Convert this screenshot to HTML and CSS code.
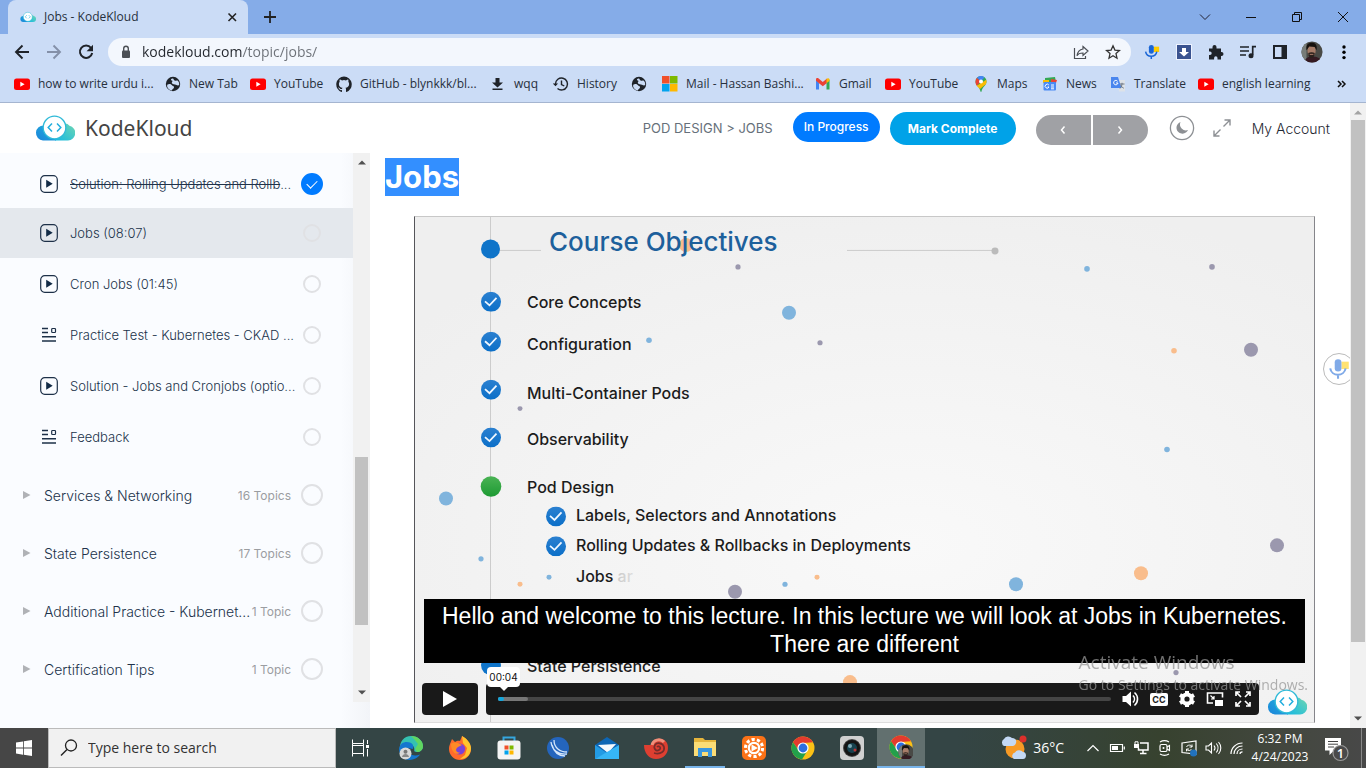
FILE: index.html
```html
<!DOCTYPE html>
<html lang="en">
<head>
<meta charset="utf-8">
<meta name="viewport" content="width=device-width, initial-scale=1">
<title>Jobs - KodeKloud</title>
<link rel="stylesheet" href="styles.css">
</head>
<body>
<svg class="defs" width="0" height="0" aria-hidden="true">
  <defs>
    <linearGradient id="gl" x1="0" y1="1" x2="1" y2="0"><stop offset="0" stop-color="#1b84da"/><stop offset="1" stop-color="#22b4dc"/></linearGradient>
    <linearGradient id="gr" x1="0" y1="1" x2="1" y2="0"><stop offset="0" stop-color="#15b9e2"/><stop offset="1" stop-color="#6fd6b2"/></linearGradient>
    <linearGradient id="blueBall" x1="0" y1="0" x2="0" y2="1"><stop offset="0" stop-color="#2b80d0"/><stop offset="1" stop-color="#0b6fc8"/></linearGradient>
    <linearGradient id="greenBall" x1="0" y1="0" x2="0" y2="1"><stop offset="0" stop-color="#4ab354"/><stop offset="1" stop-color="#1d9a33"/></linearGradient>
    <radialGradient id="paper" cx=".55" cy=".65" r=".7"><stop offset="0" stop-color="#f9f9f9"/><stop offset="1" stop-color="#efefef"/></radialGradient>
    <linearGradient id="fade" x1="0" x2="1"><stop offset="0" stop-color="#999"/><stop offset="1" stop-color="#ddd"/></linearGradient>
    <symbol id="cloud" viewBox="0 0 40 26">
      <path d="M8 25.500h13V9L9 10.500A7.500 7.500 0 0 0 8 25.500z" fill="url(#gl)"/>
      <path d="M20 25.500h13a7.500 7.500 0 0 0 1.500-14.800A6 6 0 0 0 28 9l-8 4z" fill="url(#gr)"/>
      <circle cx="19.500" cy="12.500" r="11.300" fill="#fff" stroke="#2fbad8" stroke-width="1.300"/>
      <path d="M17 8.500 13.200 12.500 17 16.500M22 8.500l3.800 4-3.800 4" fill="none" stroke="#22aede" stroke-width="1.500"/>
    </symbol>
    <symbol id="yt" viewBox="0 0 16 16"><rect y="2.500" width="16" height="11.500" rx="2.500" fill="#f00"/><path d="M6.300 5.800v4.900l4.300-2.450z" fill="#fff"/></symbol>
    <symbol id="globe" viewBox="0 0 16 16"><circle cx="8" cy="8" r="7.200" fill="#1f2329"/><path d="M2.500 8.500C4 7.500 6 8 7 9.200s2.500.6 2 2.300-2 1.500-2.200 3A6 6 0 0 1 2 10zM7.500 2.500c1.800.3.800 1.500 2 2s1.600-.4 3 0c1.500 1 1.800 3 1.700 4.500-1.200 1-2 .2-3.200-.3-1.500-.6-3.300-.2-4-1.500S8.600 5 6.800 4.500 6.500 2.600 7.500 2.500z" fill="#cbdcf6"/></symbol>
    <symbol id="mic" viewBox="0 0 18 18"><path d="M11 3h6v6h-6z" fill="#fc0"/><rect x="5.500" y="1" width="5.500" height="10" rx="2.700" fill="#1a66d6"/><path d="M1.800 8.500a6.400 6.400 0 0 0 12.600 0M8.200 13.500V17" fill="none" stroke="#1a66d6" stroke-width="1.700"/></symbol>
    <symbol id="face" viewBox="0 0 24 24"><clipPath id="fc"><circle cx="12" cy="12" r="11.500"/></clipPath><g clip-path="url(#fc)"><path d="M0 0h24v24H0z" fill="#494a46"/><path d="M0 0h6v24H0z" fill="#777c78"/><path d="M4 24c0-5 4-7 8-7s10 1 11 7z" fill="#351a22"/><ellipse cx="11.500" cy="10.500" rx="4.500" ry="6.500" fill="#a67c68"/><path d="M6 10C5 3 9 2 12 2s6 2 5 8l-2-3.500-6-.5z" fill="#16120f"/><path d="M8 13c2-1 5-1 7 0-.3 4-2 5.500-3.500 5.500S8 17 8 13z" fill="#2a201c"/><path d="M9.500 14.600h4" stroke="#b48370"/></g></symbol>
    <symbol id="chrome" viewBox="0 0 24 24"><circle cx="12" cy="12" r="11.500" fill="#fbc116"/><path d="M2 6.200A11.500 11.500 0 0 1 22 6.300L12 7a5 5 0 0 0-4.500 7z" fill="#e33b2e"/><path d="M2 6.200A11.500 11.500 0 0 0 11 23.500L16.500 14.500 12 17a5 5 0 0 1-4.600-3z" fill="#23a04b"/><circle cx="12" cy="12" r="5.600" fill="#fff"/><circle cx="12" cy="12" r="4.400" fill="#2d6fe0"/></symbol>
    <symbol id="lesson" viewBox="0 0 18 18"><rect x=".7" y=".7" width="16.600" height="16.600" rx="4" fill="none" stroke="#1d3048" stroke-width="1.200"/><path d="M6.200 4.800v8l6.500-4z" fill="#122b46"/></symbol>
    <symbol id="quiz" viewBox="0 0 18 18"><path d="M2 2.500h6M2 6.500h6M2 10.700h14M2 15h14" stroke="#1d3048" stroke-width="1.400"/><rect x="11.700" y="2.500" width="3.800" height="4" rx=".8" fill="none" stroke="#1d3048" stroke-width="1.200"/></symbol>
    <symbol id="tick" viewBox="0 0 20 20"><circle cx="10" cy="10" r="10" fill="url(#blueBall)"/><path d="M4 9.500 8.500 13.500 15.500 6" fill="none" stroke="#eef6ff" stroke-width="1.800"/></symbol>
  </defs>
</svg>

<header class="browser">
  <div class="tabstrip">
    <div class="tab">
      <svg class="i16"><use href="#cloud"/></svg>
      <span class="tab-title">Jobs - KodeKloud</span>
      <button class="icon-btn small" aria-label="Close tab"><svg class="i16" viewBox="0 0 16 16"><path d="m4.500 4.500 7.500 7.500m0-7.500-7.500 7.500" stroke="#222" stroke-width="1.600"/></svg></button>
    </div>
    <button class="icon-btn" aria-label="New tab"><svg class="i16" viewBox="0 0 16 16"><path d="M8 2v12M2 8h12" stroke="#222" stroke-width="1.800"/></svg></button>
    <div class="window-buttons">
      <button aria-label="Search tabs"><svg class="i16" viewBox="0 0 16 16"><path d="m3 5.500 5 5 5-5" fill="none" stroke="#223"/></svg></button>
      <button aria-label="Minimise"><svg class="i16" viewBox="0 0 16 16"><path d="M3 8.500h10" stroke="#111"/></svg></button>
      <button aria-label="Restore"><svg class="i16" viewBox="0 0 16 16"><path d="M3.500 5.500h7v7h-7zM5.500 5.500v-2h7v7h-2" fill="none" stroke="#111"/></svg></button>
      <button aria-label="Close"><svg class="i16" viewBox="0 0 16 16"><path d="m3 3 10 10M13 3 3 13" stroke="#111"/></svg></button>
    </div>
  </div>
  <div class="toolbar">
    <button class="icon-btn" aria-label="Back"><svg class="i16" viewBox="0 0 16 16"><path d="M15 8H2m6.500-6.500L2 8l6.500 6.500" fill="none" stroke="#1f2329" stroke-width="1.900"/></svg></button>
    <button class="icon-btn" aria-label="Forward"><svg class="i16" viewBox="0 0 16 16"><path d="M1 8h13M7.500 1.500 14 8l-6.500 6.500" fill="none" stroke="#8490a8" stroke-width="1.900"/></svg></button>
    <button class="icon-btn" aria-label="Reload"><svg class="i16" viewBox="0 0 16 16"><path d="M13 3.800A6.200 6.200 0 1 0 14.200 9" fill="none" stroke="#1f2329" stroke-width="2"/><path d="M15 .8v6.400H8.600z" fill="#1f2329"/></svg></button>
    <div class="omnibox">
      <svg class="i16" viewBox="0 0 16 16"><rect x="4" y="6.500" width="8" height="7.500" rx="1" fill="#4b4f55"/><path d="M5.700 7V4.500a2.300 2.300 0 0 1 4.600 0V7" fill="none" stroke="#4b4f55" stroke-width="1.400"/></svg>
      <input class="url" type="text" aria-label="Address" value="kodekloud.com/topic/jobs/">
      <button class="icon-btn" aria-label="Share"><svg class="i16" viewBox="0 0 16 16"><path d="M1.500 4v10.500h11V12M10 2.500 15 7l-5 4.500V9c-3 0-5 .8-6 2.800C4.500 8 6.500 5.500 10 5z" fill="none" stroke="#4b4f55" stroke-width="1.200"/></svg></button>
      <button class="icon-btn" aria-label="Bookmark"><svg class="i16" viewBox="0 0 16 16"><path d="m8 1.800 1.900 4.300 4.600.4-3.500 3.100 1 4.600-4-2.400-4 2.400 1-4.600L1.500 6.500l4.600-.4z" fill="none" stroke="#333" stroke-width="1.300"/></svg></button>
    </div>
    <button class="icon-btn" aria-label="Voice input"><svg class="i16"><use href="#mic"/></svg></button>
    <button class="icon-btn" aria-label="Downloader"><svg class="i16" viewBox="0 0 16 16"><path d="M0 0h16v16H0z" fill="#eef3ff"/><path d="M1 1h14v14H1z" fill="#3a5390"/><path d="M6 4h4v4h3l-5 4.500L3 8h3z" fill="#fff"/></svg></button>
    <button class="icon-btn" aria-label="Extensions"><svg class="i16" viewBox="0 0 16 16"><path d="M1 4.500h3.500V3a2 2 0 0 1 4 0v1.500H13V8h.5a2 2 0 0 1 0 4H13v3.500H9.500V14a1.700 1.700 0 0 0-3.400 0v1.500H1V11h1a1.700 1.700 0 0 0 0-3.400H1z" fill="#1f2329"/></svg></button>
    <button class="icon-btn" aria-label="Media"><svg class="i16" viewBox="0 0 16 16"><path d="M0 3h9M0 7h9M0 11h6M16 2.700h-3.300V11" fill="none" stroke="#1f2329" stroke-width="1.700"/><circle cx="11" cy="11.700" r="2.500" fill="#1f2329"/></svg></button>
    <button class="icon-btn" aria-label="Side panel"><svg class="i16" viewBox="0 0 16 16"><path d="M2 2h12v12H2z" fill="none" stroke="#1f2329" stroke-width="2"/><path d="M9.500 2H14v12H9.500z" fill="#1f2329"/></svg></button>
    <button class="icon-btn" aria-label="Profile"><svg class="i22"><use href="#face"/></svg></button>
    <button class="icon-btn" aria-label="Menu"><svg class="i16" viewBox="0 0 16 16"><circle cx="8" cy="3" r="1.700"/><circle cx="8" cy="8.300" r="1.700"/><circle cx="8" cy="13.600" r="1.700"/></svg></button>
  </div>
  <nav class="bookmarks" aria-label="Bookmarks">
    <a href="#"><svg class="i16"><use href="#yt"/></svg>how to write urdu i...</a>
    <a href="#"><svg class="i16"><use href="#globe"/></svg>New Tab</a>
    <a href="#"><svg class="i16"><use href="#yt"/></svg>YouTube</a>
    <a href="#"><svg class="i16" viewBox="0 0 16 16"><path d="M8 .4a8 8 0 0 0-2.500 15.500c.4.100.5-.2.500-.4v-1.400c-2.200.5-2.700-1-2.700-1-.4-.9-.9-1.200-.9-1.200-.7-.5.100-.5.100-.5.800.1 1.200.8 1.200.8.700 1.200 1.900.9 2.300.7.100-.5.300-.9.500-1.100-1.800-.2-3.600-.9-3.600-4 0-.9.300-1.600.8-2.100-.1-.2-.4-1 .1-2.100 0 0 .7-.2 2.200.8a7.500 7.500 0 0 1 4 0c1.500-1 2.200-.8 2.200-.8.400 1.100.2 1.900.1 2.100.5.600.8 1.300.8 2.100 0 3.100-1.900 3.800-3.700 4 .3.300.6.800.6 1.500v2.200c0 .2.100.5.500.4A8 8 0 0 0 8 .4z" fill="#1f2329"/></svg>GitHub - blynkkk/bl...</a>
    <a href="#"><svg class="i16" viewBox="0 0 16 16"><path d="M5.500 2h4v4.500H13L7.500 11.500 2 6.500h3.500zM2.500 12.500h10V14h-10z" fill="#1f2329"/></svg>wqq</a>
    <a href="#"><svg class="i16" viewBox="0 0 16 16"><path d="M2.500 8a6 6 0 1 1 2 4.500M8.500 4.500V8.500l2.800 1.500" fill="none" stroke="#1f2329" stroke-width="1.400"/><path d="M-.2 7.500h5.300L2.500 10.300z" fill="#1f2329"/></svg>History</a>
    <a href="#" aria-label="Site"><svg class="i16"><use href="#globe"/></svg></a>
    <a href="#"><svg class="i16" viewBox="0 0 16 16"><path d="M0 0h7.500v7.500H0z" fill="#f0502a"/><path d="M8 0h7.500v7.500H8z" fill="#7eb900"/><path d="M0 8h7.500v7.500H0z" fill="#01a3ee"/><path d="M8 8h7.500v7.500H8z" fill="#feb800"/></svg>Mail - Hassan Bashi...</a>
    <a href="#"><svg class="i16" viewBox="0 0 16 16"><path d="M1 3.500V13.500h3V7z" fill="#4285f4"/><path d="M14.500 3.500v10h-3V7z" fill="#34a853"/><path d="M1 4.800V3.500c0-1.400 1.600-1.800 2.600-1L7.800 6l4.200-3.500V7L7.800 10.200 4 7.200z" fill="#ea4335"/><path d="M11.500 7V3c1-1.200 3-.8 3 .8V5z" fill="#fbbc04"/></svg>Gmail</a>
    <a href="#"><svg class="i16"><use href="#yt"/></svg>YouTube</a>
    <a href="#"><svg class="i16" viewBox="0 0 16 16"><path d="M2.500 5.500a5.500 5.500 0 0 1 11 0c0 4-4.200 5.300-5 10-.1.600-.9.600-1 0-.8-4.700-5-6-5-10z" fill="#34a853"/><path d="M2.500 5.500A5.500 5.500 0 0 1 4 1.700l4 3.800-4.300 4.300c-.8-1.300-1.200-2.600-1.200-4.300z" fill="#ea4335"/><path d="M4 1.700A5.500 5.500 0 0 1 11.500 1.200L8 5.500z" fill="#4285f4"/><path d="m3.700 9.800 9.500-6c.6 1.700.3 3.200-.5 4.500L7 13z" fill="#fbbc04"/><circle cx="8" cy="5.500" r="2" fill="#fff"/></svg>Maps</a>
    <a href="#"><svg class="i16" viewBox="0 0 16 16"><path d="m3 2 10-1 1 5H3z" fill="#34a853"/><path d="M1 4h6v3H1z" fill="#fbbc04"/><path d="m9 3 6 1-1 3H9z" fill="#ea4335"/><rect x="1.500" y="6" width="12.500" height="8.500" rx="1" fill="#4a8af4"/><path d="M6.800 9A2 2 0 1 0 7 11H5.600M9 9h3M9 11h3M9 12.800h3" fill="none" stroke="#fff"/></svg>News</a>
    <a href="#"><svg class="i16" viewBox="0 0 16 16"><path d="M7 4h8v11.500H9z" fill="#dde2e8"/><path d="M1 1h7l3.500 11H1z" fill="#4a86ee"/><path d="M7.600 5.300A2.200 2.200 0 1 0 8 7H6" fill="none" stroke="#fff"/><path d="M10 8h4.500M12 6.800V8c-.2 2-1 3.500-2 4.500M10.800 9c.5 1.500 1.500 2.600 3 3.200" fill="none" stroke="#66717d" stroke-width=".9"/></svg>Translate</a>
    <a href="#"><svg class="i16"><use href="#yt"/></svg>english learning</a>
    <button class="more" aria-label="More bookmarks"><svg class="i16" viewBox="0 0 16 16"><path d="m4 5 3 3-3 3M8 5l3 3-3 3" fill="none" stroke="#111" stroke-width="1.500"/></svg></button>
  </nav>
</header>

<div class="viewport">
  <div class="page">
    <header class="site-header">
      <a class="brand" href="#"><svg class="brand-mark"><use href="#cloud"/></svg>KodeKloud</a>
      <span class="crumb">POD DESIGN &gt; JOBS</span>
      <button class="pill progress">In Progress</button>
      <button class="pill complete">Mark Complete</button>
      <div class="pager">
        <button aria-label="Previous"><svg class="i16" viewBox="0 0 16 16"><path d="M9.500 4.500 6.500 8l3 3.500" fill="none" stroke="#fff" stroke-width="1.500"/></svg></button>
        <button aria-label="Next"><svg class="i16" viewBox="0 0 16 16"><path d="m6.500 4.500 3 3.500-3 3.500" fill="none" stroke="#fff" stroke-width="1.500"/></svg></button>
      </div>
      <button class="plain moon" aria-label="Dark mode"><svg width="26" height="26" viewBox="0 0 26 26"><circle cx="13" cy="13" r="11.600" fill="none" stroke="#8d9094" stroke-width="1.300"/><path d="M11.500 7a6 6 0 1 0 7.500 8A6 6 0 0 1 11.500 7z" fill="#8d9094"/></svg></button>
      <button class="plain expand" aria-label="Expand"><svg width="20" height="20" viewBox="0 0 20 20"><path d="M12.500 2H18v5.500M18 2l-6.500 6.500M7.500 18H2v-5.500M2 18l6.500-6.500" fill="none" stroke="#8d9094" stroke-width="1.400"/></svg></button>
      <a class="account" href="#">My Account</a>
    </header>
    <div class="columns">
      <aside class="sidebar">
        <div class="outline">
          <ul class="lessons">
            <li><svg class="i18"><use href="#lesson"/></svg><a href="#"><s>Solution: Rolling Updates and Rollb</s>...</a><input type="checkbox" class="big" checked aria-label="Rolling updates complete"></li>
            <li class="current"><svg class="i18"><use href="#lesson"/></svg><a href="#">Jobs (08:07)</a><input type="checkbox" aria-label="Jobs complete"></li>
            <li><svg class="i18"><use href="#lesson"/></svg><a href="#">Cron Jobs (01:45)</a><input type="checkbox" aria-label="Cron Jobs complete"></li>
            <li><svg class="i18"><use href="#quiz"/></svg><a href="#">Practice Test - Kubernetes - CKAD ...</a><input type="checkbox" aria-label="Practice Test complete"></li>
            <li><svg class="i18"><use href="#lesson"/></svg><a href="#">Solution - Jobs and Cronjobs (optio...</a><input type="checkbox" aria-label="Solution complete"></li>
            <li><svg class="i18"><use href="#quiz"/></svg><a href="#">Feedback</a><input type="checkbox" aria-label="Feedback complete"></li>
          </ul>
          <ul class="sections">
            <li><svg width="8" height="10" viewBox="0 0 8 10"><path d="M0 1v8l7.500-4z"/></svg><a href="#">Services &amp; Networking</a><span>16 Topics</span><input type="checkbox" class="big" aria-label="Services complete"></li>
            <li><svg width="8" height="10" viewBox="0 0 8 10"><path d="M0 1v8l7.500-4z"/></svg><a href="#">State Persistence</a><span>17 Topics</span><input type="checkbox" class="big" aria-label="State Persistence complete"></li>
            <li><svg width="8" height="10" viewBox="0 0 8 10"><path d="M0 1v8l7.500-4z"/></svg><a href="#">Additional Practice - Kubernet...</a><span>1 Topic</span><input type="checkbox" class="big" aria-label="Additional Practice complete"></li>
            <li><svg width="8" height="10" viewBox="0 0 8 10"><path d="M0 1v8l7.500-4z"/></svg><a href="#">Certification Tips</a><span>1 Topic</span><input type="checkbox" class="big" aria-label="Certification Tips complete"></li>
          </ul>
        </div>
        <div class="scroll side-scroll"><svg width="8" height="5" viewBox="0 0 8 5"><path d="m0 4.500 4-4 4 4z" fill="#505050"/></svg><div class="track"><div class="thumb"></div></div><svg width="8" height="5" viewBox="0 0 8 5"><path d="m0 .5 4 4 4-4z" fill="#505050"/></svg></div>
      </aside>
      <main class="content">
        <h1><span>Jobs</span></h1>
        <div class="player">
          <svg class="slide" viewBox="0 0 899 506" preserveAspectRatio="none">
            <rect width="899" height="506" fill="url(#paper)"/>
            <g transform="translate(-415 -216)">
              <path d="M490.500 216v506M490 249.500h51M847 249.500h148" stroke="#ccc" fill="none"/>
              <circle cx="995" cy="250" r="3.500" fill="#bbb"/>
              <g fill="#f9bd8c"><circle cx="686" cy="244" r="7"/><circle cx="1174" cy="350" r="2.800"/><circle cx="520" cy="584" r="2.500"/><circle cx="817" cy="577" r="2.500"/><circle cx="1141" cy="573" r="7"/><circle cx="850" cy="682" r="7"/></g>
              <g fill="#80b4dd"><circle cx="1087" cy="268" r="2.800"/><circle cx="789" cy="312" r="7"/><circle cx="649" cy="339.500" r="2.800"/><circle cx="446" cy="498" r="7"/><circle cx="481" cy="558.500" r="2.600"/><circle cx="549" cy="577" r="2.500"/><circle cx="785" cy="584" r="2.600"/><circle cx="1016" cy="584" r="7"/><circle cx="1167" cy="449" r="2.800"/></g>
              <g fill="#9b98ae"><circle cx="738" cy="266" r="2.600"/><circle cx="1212" cy="266" r="2.800"/><circle cx="820" cy="342" r="2.600"/><circle cx="1251" cy="349" r="7"/><circle cx="1277" cy="545" r="7"/><circle cx="735" cy="591.500" r="7"/><circle cx="1176" cy="672.500" r="2.600"/><circle cx="520" cy="408" r="2.500"/></g>
              <circle cx="490.500" cy="248" r="9.500" fill="#0f74c9"/>
              <circle cx="491" cy="486" r="10.300" fill="url(#greenBall)"/>
              <circle cx="491" cy="665" r="10" fill="#0f74c9"/>
              <use href="#tick" x="481" y="291" width="20" height="20"/><use href="#tick" x="481" y="331" width="20" height="20"/><use href="#tick" x="481" y="379" width="20" height="20"/><use href="#tick" x="481" y="427" width="20" height="20"/><use href="#tick" x="546" y="506" width="20" height="20"/><use href="#tick" x="546" y="536" width="20" height="20"/>
              <text class="slide-title" x="549" y="250">Course Objectives</text>
              <g class="slide-text"><text x="527" y="307">Core Concepts</text><text x="527" y="349">Configuration</text><text x="527" y="398">Multi-Container Pods</text><text x="527" y="444">Observability</text><text x="527" y="493">Pod Design</text><text x="576" y="521">Labels, Selectors and Annotations</text><text x="576" y="551">Rolling Updates &amp; Rollbacks in Deployments</text><text x="576" y="582">Jobs <tspan fill="url(#fade)">ar</tspan></text><text x="527" y="672">State Persistence</text></g>
            </g>
          </svg>
          <div class="overlay">
            <p class="caption">Hello and welcome to this lecture. In this lecture we will look at Jobs in Kubernetes.<br>There are different</p>
            <div class="controls">
              <button class="play" aria-label="Play"><svg width="16" height="16" viewBox="0 0 16 16"><path d="M1 0v16l14-8z" fill="#fff"/></svg></button>
              <div class="bar">
                <div class="seek"><div class="loaded"></div><div class="played"></div><output class="time">00:04</output></div>
                <button aria-label="Volume"><svg width="20" height="20" viewBox="0 0 20 20"><path d="M1.500 7h3.500l5-4.500v15L5 13H1.500z" fill="#fff"/><path d="M12 6.500a5 5 0 0 1 0 7M13.500 3.500a8.500 8.500 0 0 1 0 13" fill="none" stroke="#fff" stroke-width="1.600"/></svg></button>
                <button class="cc" aria-label="Captions"><span>CC</span></button>
                <button aria-label="Settings"><svg width="20" height="20" viewBox="0 0 20 20"><circle cx="10" cy="10" r="4.600" fill="none" stroke="#fff" stroke-width="4"/><path d="M10 2v3M10 15v3M3 6l2.700 1.500M14.300 12.500 17 14M17 6l-2.700 1.500M5.700 12.500 3 14" stroke="#fff" stroke-width="4"/></svg></button>
                <button aria-label="Picture in picture"><svg width="20" height="20" viewBox="0 0 20 20"><path d="M8 14H2.500V4h15v4.500" fill="none" stroke="#fff" stroke-width="1.600"/><path d="M10 11h8v6h-8z" fill="#fff"/><path d="M5.500 6.500 9 10M9 7v3H6" fill="none" stroke="#fff" stroke-width="1.200"/></svg></button>
                <button aria-label="Fullscreen"><svg width="20" height="20" viewBox="0 0 20 20"><path d="M3 7V3h4M13 3h4v4M17 13v4h-4M7 17H3v-4M3 3l5 5M17 3l-5 5M17 17l-5-5M3 17l5-5" fill="none" stroke="#fff" stroke-width="1.700"/></svg></button>
              </div>
              <svg class="brand-mark"><use href="#cloud"/></svg>
            </div>
          </div>
        </div>
      </main>
    </div>
    <button class="voice" aria-label="Voice typing"><svg width="22" height="22"><use href="#mic"/></svg></button>
  </div>
  <div class="scroll page-scroll"><svg width="8" height="5" viewBox="0 0 8 5"><path d="m0 4.500 4-4 4 4z" fill="#a3a3a3"/></svg><div class="track"><div class="thumb"></div></div><svg width="8" height="5" viewBox="0 0 8 5"><path d="m0 .5 4 4 4-4z" fill="#505050"/></svg></div>
</div>

<div class="watermark"><p class="wm-title">Activate Windows</p><p class="wm-text">Go to Settings to activate Windows.</p></div>

<footer class="taskbar">
  <button class="start" aria-label="Start"><svg class="i16" viewBox="0 0 16 16"><path d="M0 2.500 7 1.400V7.600H0zM7.800 1.300 16 0v7.600H7.800zM0 8.400h7v6.300l-7-1.100zM7.800 8.400H16V16l-8.200-1.200z" fill="#fff"/></svg></button>
  <label class="search"><svg width="18" height="18" viewBox="0 0 18 18"><circle cx="11" cy="6.500" r="5.500" fill="none" stroke="#222" stroke-width="1.300"/><path d="m7 10.500-6 6" stroke="#222" stroke-width="1.400"/></svg><input type="text" placeholder="Type here to search" aria-label="Search"></label>
  <div class="apps">
    <button class="task-view" aria-label="Task view"><svg class="i24" viewBox="0 0 24 24"><path d="M4.500 3.500v4h11v-4M4.500 20.500v-3h11v3M4.500 7.500v10M15.500 7.500v10M4.500 9.500h11M19.500 4v4M19.500 13v7.500" fill="none" stroke="#fff"/><path d="M18 9h3v3h-3z" fill="#fff"/></svg></button>
    <button aria-label="Edge"><svg class="i24" viewBox="0 0 24 24"><path d="M1 14C0 6 5 0 12 0s12 5 12 10c0 4-3 6-6 6-5 0-1-3-4-6-2-2-10-1-13 4z" fill="#35c1b1"/><path d="M12 0c7 0 12 5 12 10 0 4-3 6-6 6l-2-3 3-5-4-5z" fill="#60d660"/><path d="M0 13C1 6 7 5 11 6.500c3 1 4 4 3 6.500l-5-1c-1 6 5 9 12 6.500-4 6-14 8-19 1-1-2-2-4-2-6.500z" fill="#1476cf"/><circle cx="6.500" cy="17.500" r="6" fill="#d8d8d8"/><circle cx="6.500" cy="15.800" r="2" fill="#777"/><path d="M3 21c.5-4 6.500-4 7 0z" fill="#888"/></svg></button>
    <button aria-label="Firefox"><svg class="i24" viewBox="0 0 24 24"><path d="M2 8 4 3l3 3c2-1.500 4-1.500 5-1l2-5c4 2 9 7 9 13a11 11 0 0 1-22 0c0-2 .4-3.500 1-5z" fill="#ff6a2b"/><path d="m14 0 1 7 4 5-2 7-5 4c8 0 11-6 11-11S18 2 14 0z" fill="#ffc52e"/><circle cx="11.500" cy="13" r="5.600" fill="#7a42d8"/><path d="M3 8c2-2 5-2 8-.5L14 9l-4 2c-4 3-1 6 2 5.500-3 3.500-9 0-9-8.500z" fill="#ff8a25"/></svg></button>
    <button aria-label="Store"><svg class="i24" viewBox="0 0 24 24"><path d="M6.500 6V1.500h11V6" fill="none" stroke="#35a6de" stroke-width="2"/><rect x=".5" y="4.500" width="23" height="19" rx="3" fill="#f4f4f4"/><path d="M7.500 9.500h4v4h-4z" fill="#f0502a"/><path d="M12.500 9.500h4v4h-4z" fill="#7eb900"/><path d="M7.500 14.500h4v4h-4z" fill="#01a3ee"/><path d="M12.500 14.500h4v4h-4z" fill="#feb800"/></svg></button>
    <button aria-label="Browser"><svg class="i24" viewBox="0 0 24 24"><circle cx="12" cy="12" r="11" fill="#2465bd"/><path d="M5 6c1 8 7 13 16 12M8 4c0 8 6 12 13 12M6 9c2 7 7 11 13 11" fill="none" stroke="#d3e5fa" stroke-width="1.300"/></svg></button>
    <button aria-label="Mail"><svg class="i24" viewBox="0 0 24 24"><path d="M0 9 12 1l12 8v14H0z" fill="#0d66b5"/><path d="m3 9 18-1-8 9z" fill="#f5f9fd"/><path d="M0 9 12 17 0 23z" fill="#239be4"/><path d="M24 9v14H0z" fill="#36b5f5"/></svg></button>
    <button aria-label="Nautilus"><svg class="i24" viewBox="0 0 24 24"><path d="M0 9h7c1-7 13-9 16-2s-1 16-11 16C5 23 0 17 0 9z" fill="#de3f31"/><path d="M10 17c7 2 11-2 10-6s-7-5-9-2 1 7 4 5 0-5-2-3" fill="none" stroke="#772c2b" stroke-width="1.700"/><path d="M8 9c1-5 8-7 12-3" fill="none" stroke="#f08f7a" stroke-width="3"/></svg></button>
    <button class="running" aria-label="File Explorer"><svg class="i24" viewBox="0 0 24 24"><path d="M1 3h9l2 2h11v16H1z" fill="#e6b53c"/><path d="M1 7h22v14H1z" fill="#fbdc75"/><path d="M5 22v-9h14v9h-4v-5H9v5z" fill="#3a96dd"/></svg></button>
    <button aria-label="Media player"><svg class="i24" viewBox="0 0 24 24"><rect width="24" height="24" rx="5" fill="#fb7217"/><circle cx="12" cy="12" r="8.600" fill="none" stroke="#fff" stroke-width="3" stroke-dasharray="3.200 2.200"/><circle cx="12" cy="12" r="6.300" fill="#fff"/><circle cx="12" cy="12" r="4" fill="#fb7217"/><path d="m9.500 8.500 6.500 3.500-6.500 3.500z" fill="#fff"/></svg></button>
    <button aria-label="Chrome"><svg class="i24"><use href="#chrome"/></svg></button>
    <button aria-label="Camera"><svg class="i24" viewBox="0 0 24 24"><rect width="24" height="24" rx="4" fill="#d0d0d0"/><circle cx="12" cy="12" r="9" fill="#444"/><circle cx="12" cy="12" r="8" fill="#141414"/><circle cx="12" cy="12" r="5" fill="#17424f"/><circle cx="10" cy="10" r="2" fill="#7fa9b5"/><circle cx="15" cy="14" r="1.500" fill="#b33"/></svg></button>
    <button class="running active" aria-label="Chrome window"><svg class="i24" viewBox="0 0 24 24"><use href="#chrome" width="24" height="24"/><use href="#face" x="9" y="9" width="16" height="16"/></svg></button>
  </div>
  <div class="tray">
    <svg width="28" height="28" viewBox="0 0 28 28"><circle cx="15" cy="15" r="9.500" fill="#f79a25"/><circle cx="23" cy="5" r="3.500" fill="#dc302b"/><path d="M4 12a4 4 0 0 1 0-7 5 5 0 0 1 8-1c3 0 5 2 4 5s-3 3-4 3z" fill="#c4d9f5"/><path d="M14 25a3.500 3.500 0 0 1 1-6.500 5 5 0 0 1 8-.5c4 0 4 7 0 7z" fill="#c4d9f5"/></svg>
    <span class="temp">36°C</span>
    <div class="tray-icons">
      <svg viewBox="0 0 18 18"><path d="m3.500 12 5.500-5.500 5.500 5.500" fill="none" stroke="#fff" stroke-width="1.200"/></svg>
      <svg viewBox="0 0 18 18"><path d="M2.500 5.500h12v7h-12zM16.300 7.500v3" fill="none" stroke="#fff" stroke-width="1.200"/><path d="M4 7h6v4H4z" fill="#fff"/></svg>
      <svg viewBox="0 0 18 18"><path d="M8 4h8v7H6.500V9M11 11v3.500M8 14.500h6.500" fill="none" stroke="#fff" stroke-width="1.500"/><path d="M2 5h5v4H2z" fill="#fff"/><path d="M3 5V2.800h3V5" fill="none" stroke="#fff"/></svg>
      <svg viewBox="0 0 18 18"><rect x="4" y="5.500" width="7" height="7" rx="1.500" fill="none" stroke="#fff" stroke-width="1.200"/><circle cx="7.500" cy="9" r="1" fill="#fff"/><path d="m11 8 2.500-1.500v5L11 10M4 3c3-1.800 6-1.800 9 0M4 15c3 1.800 6 1.800 9 0" fill="none" stroke="#fff" stroke-width="1.100"/></svg>
      <svg viewBox="0 0 18 18"><path d="m2 4 14-2v13L2 13.500z" fill="none" stroke="#fff" stroke-width="1.200"/><path d="M6.500 8c1-2.500 5-2.500 5.500 0M11.500 10c-1 2-4 2-5 0M12 5.500V8H9.500M6.500 12.300V10H9" fill="none" stroke="#fff"/><circle cx="13.500" cy="14" r="3.500" fill="#2172bd"/></svg>
      <svg viewBox="0 0 18 18"><path d="M2 7h2.500l3-3v10l-3-3H2zM10 6.500a4 4 0 0 1 0 5M12.300 4.500a7 7 0 0 1 0 9M14.500 3a9 9 0 0 1 0 12" fill="none" stroke="#fff" stroke-width="1.100"/></svg>
      <svg viewBox="0 0 18 18"><path d="M3 15C3 9 8 4 14.500 4M6 15c0-4.500 3.500-8 8.500-8M9 15c0-3 2.500-5 5.500-5M12 15c0-1.200 1-2.200 2.500-2.200" fill="none" stroke="#fff" stroke-width="1.200"/></svg>
    </div>
    <time class="clock"><span>6:32 PM</span><span>4/24/2023</span></time>
    <button class="notice" aria-label="Notifications"><svg width="30" height="28" viewBox="0 0 30 28"><path d="M2 4h16v12.500h-7L6.500 21v-4.500H2z" fill="#fff"/><path d="M5 7.500h10M5 10.200h10M5 13h6" stroke="#444"/><circle cx="17.500" cy="19" r="7.500" fill="#4a4a4a" stroke="#999" stroke-width="1.200"/></svg><span class="badge">1</span></button>
  </div>
</footer>
</body>
</html>
```
FILE: styles.css
```css
* { box-sizing: border-box; }
body { margin: 0; height: 100vh; display: flex; flex-direction: column; overflow: hidden; background: #fff; font-family: Inter, sans-serif; color: #333; }
button { margin: 0; padding: 0; border: 0; background: none; font: inherit; color: inherit; display: flex; align-items: center; justify-content: center; }
a { color: inherit; text-decoration: none; }
ul, p, h1 { margin: 0; padding: 0; list-style: none; }
svg { flex: none; display: block; }
.defs { position: absolute; }
.i16 { width: 16px; height: 16px; }
.i18 { width: 18px; height: 18px; }
.i22 { width: 22px; height: 22px; }
.i24 { width: 24px; height: 24px; }

.browser { flex: none; font: 12px/16px "Open Sans", "Noto Sans", sans-serif; color: #27303d; background: #cbdcf6; border-bottom: 1px solid #a5b5d0; }
.tabstrip { display: flex; align-items: center; height: 34px; padding-left: 8px; background: #85ace8; }
.tab { display: flex; align-items: center; gap: 8px; width: 240px; height: 34px; padding: 0 8px 0 12px; background: #cbdcf6; border-radius: 8px 8px 0 0; }
.tab-title { flex: 1; white-space: nowrap; }
.icon-btn { flex: none; width: 32px; height: 28px; }
.icon-btn.small { width: 16px; height: 16px; }
.tabstrip > .icon-btn { margin-left: 6px; }
.window-buttons { display: flex; margin-left: auto; }
.window-buttons button { width: 46px; height: 28px; }
.toolbar { display: flex; align-items: center; height: 36px; padding: 0 6px; }
.omnibox { flex: 1; display: flex; align-items: center; height: 28px; margin: 0 5px 0 6px; padding: 0 2px 0 10px; border-radius: 14px; background: #f3f7fd; }
.url { flex: 1; min-width: 0; margin-left: 8px; padding: 0; border: 0; font: 14px/20px "Open Sans", "Noto Sans", sans-serif; color: transparent; background: linear-gradient(90deg, #23272d 100px, #6b7077 100px) text; }
.bookmarks { display: grid; grid-template-columns: 151px 85px 86px 154px 63px 78px 31px 153px 70px 88px 69px 68px 88px 1fr 24px; align-items: center; height: 32px; padding: 0 12px 4px 14px; }
.bookmarks a { display: flex; align-items: center; gap: 8px; white-space: nowrap; }

.viewport { flex: 1; min-height: 0; display: flex; }
.page { position: relative; flex: 1; min-width: 0; display: flex; flex-direction: column; overflow: hidden; }
.site-header { flex: none; display: flex; align-items: center; height: 50px; padding: 0 20px 0 35px; }
.brand { display: flex; align-items: center; gap: 10px; margin-right: auto; font: 21px/28px "Noto Sans", sans-serif; color: #444; }
.brand-mark { width: 40px; height: 26px; }
.crumb { font-size: 13px; color: #66707a; margin-right: 20px; }
.pill { color: #fff; font-size: 12px; border-radius: 17px; }
.progress { width: 87px; height: 30px; margin-right: 10px; margin-bottom: 3px; background: #007bff; font-weight: 500; }
.complete { width: 126px; height: 33px; margin-right: 20px; background: #00a2e8; font-weight: 700; }
.pager { display: flex; gap: 2px; margin: 3px 21px 0 0; border-radius: 15px; overflow: hidden; }
.pager button { width: 55px; height: 30px; background: #a0a1a5; }
.moon { margin-right: 17px; }
.expand { margin-right: 20px; }
.account { font-size: 14px; font-weight: 300; color: #1f2933; }

.columns { flex: 1; min-height: 0; display: flex; }
.sidebar { flex: none; width: 370px; display: flex; background: linear-gradient(90deg, #fafcff 92%, #f2f4f8); }
.outline { flex: 1; padding-top: 8px; font-weight: 300; color: #20324a; }
.lessons li { display: flex; align-items: center; height: 50px; margin-bottom: 1px; padding: 0 30px 0 40px; font-size: 13px; }
.lessons li:first-child { height: 46px; }
.lessons a { flex: 1; margin-left: 12px; white-space: nowrap; }
.lessons .current { background: #e4e8ed; }
.sections { padding-top: 3px; }
.sections li { display: flex; align-items: center; height: 58px; padding: 0 30px 0 23px; font-size: 14px; }
.sections svg { fill: #b0b2b6; }
.sections a { flex: 1; margin-left: 13px; white-space: nowrap; }
.sections span { margin-right: 10px; font-size: 12px; font-weight: 400; color: #9b9da1; white-space: nowrap; }
input[type="checkbox"] { appearance: none; flex: none; display: grid; place-items: center; width: 18px; height: 18px; margin: 0 2px; border: 2px solid #e0e1e4; border-radius: 50%; }
input[type="checkbox"].big { width: 22px; height: 22px; margin: 0; }
input[type="checkbox"]:checked { border-color: #007bff; background: #007bff; }
input[type="checkbox"]:checked::after { content: ""; width: 9px; height: 5px; margin-bottom: 3px; border: solid #fff; border-width: 0 0 1px 1px; transform: rotate(-45deg); }

.scroll { flex: none; display: flex; flex-direction: column; align-items: center; gap: 5px; padding: 7px 2px; background: #f1f1f1; }
.side-scroll { width: 17px; margin-bottom: 26px; }
.page-scroll { width: 16px; padding: 7px 1px; }
.track { flex: 1; display: flex; flex-direction: column; width: 100%; }
.thumb { background: #c1c1c1; }
.side-scroll .track::before { content: ""; flex: 291; }
.side-scroll .thumb { flex: 171; }
.side-scroll .track::after { content: ""; flex: 61; }
.page-scroll .thumb { flex: 522; }
.page-scroll .track::after { content: ""; flex: 69; }

.content { flex: 1; min-width: 0; padding: 5px 35px 0 15px; }
.content h1 { font-size: 31px; line-height: 38px; font-weight: 700; color: #fff; }
.content h1 span { display: inline-block; background: #338fff; }
.player { position: relative; margin: 20px 0 0 29px; border: 1px solid #ccc; border-color: #c8c8c8 #85858a #ddd #55555a; }
.slide { width: 100%; height: auto; aspect-ratio: 899 / 505; }
.slide-title { font: 500 26px Inter, sans-serif; fill: #1d609c; }
.slide-text { font: 500 16px Inter, sans-serif; fill: #1c1c1c; }
.overlay { position: absolute; inset: auto 7px 7px 7px; }
.caption { margin: 0 2px 20px; padding: 3px 10px 5px; background: #000; color: #fff; font: 23px/28px "Liberation Sans", Arial, sans-serif; text-align: center; }
.controls { display: flex; align-items: flex-end; gap: 8px; }
.play { width: 56px; height: 32px; border-radius: 4px; background: #191919; }
.bar { flex: 1; display: flex; align-items: center; gap: 8px; height: 32px; padding: 0 6px 0 12px; border-radius: 4px; background: #191919; }
.seek { position: relative; flex: 1; height: 4px; margin-right: 2px; border-radius: 2px; background: #454545; }
.loaded, .played { position: absolute; left: 0; height: 4px; border-radius: 2px; }
.loaded { width: 30px; background: #777; }
.played { width: 6px; background: #13a6dc; }
.time { position: absolute; left: -11px; bottom: 14px; width: 33px; height: 20px; border-radius: 4px; background: #fff; color: #111; font: 10px/20px Inter, sans-serif; text-align: center; }
.time::after { content: ""; position: absolute; left: 13px; top: 100%; border: 4px solid transparent; border-top-color: #fff; border-bottom: 0; }
.cc { width: 20px; }
.cc span { padding: 0 2px; border-radius: 2px; background: #fff; color: #191919; font: 700 9px/13px Inter, sans-serif; }
.voice { position: absolute; right: -5px; top: 250px; width: 32px; height: 32px; border: 1px solid #bbb; border-radius: 50%; background: #fff; }
.voice svg { opacity: .55; }
.watermark { position: fixed; right: 58px; bottom: 73px; font-family: "Open Sans", "Noto Sans", sans-serif; color: rgba(150, 150, 150, .75); white-space: nowrap; }
.wm-title { font-size: 19px; line-height: 26px; }
.wm-text { font-size: 14px; line-height: 20px; }

.taskbar { flex: none; display: flex; height: 40px; color: #fff; font: 12px/18px "Open Sans", "Noto Sans", sans-serif; background: linear-gradient(90deg, #344545 70%, #37422f 85%, #454842 96%, #484848); }
.start { width: 48px; background: #464646; }
.search { display: flex; align-items: center; gap: 10px; width: 288px; padding: 0 11px; background: #f1f1f1; border: 1px solid #bbb; }
.search input { flex: 1; min-width: 0; padding: 0; border: 0; background: none; font: 14px/20px "Open Sans", "Noto Sans", sans-serif; }
.search input::placeholder { color: #333; opacity: 1; }
.apps { display: flex; gap: 1px; }
.apps button { width: 48px; }
.apps .task-view { margin-right: 2px; }
.running { border: solid #78b4ea; border-width: 0 0 2px; }
.apps .running:not(.active) { width: 40px; margin: 0 4px; }
.active { background: #62706f; }
.tray { display: flex; align-items: center; margin-left: auto; padding-right: 4px; }
.temp { margin: 0 20px 0 5px; font-size: 14px; }
.tray-icons { display: flex; gap: 6px; }
.tray-icons svg { width: 18px; height: 18px; }
.clock { display: flex; flex-direction: column; align-items: center; width: 68px; }
.notice { position: relative; width: 48px; height: 40px; border-right: 1px solid #888; }
.badge { position: absolute; left: 21px; top: 16px; width: 11px; font-size: 13px; line-height: 18px; font-weight: 600; color: #fff; text-align: center; }
```
